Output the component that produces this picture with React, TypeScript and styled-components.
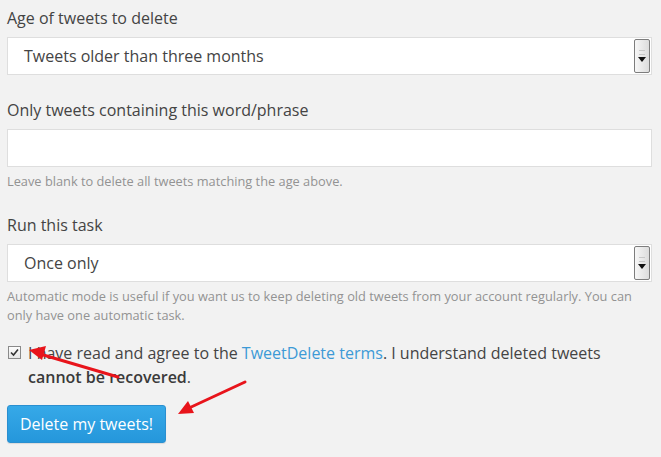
import React from "react";
import styled, { createGlobalStyle } from "styled-components";

const Global = createGlobalStyle`
  html, body { margin: 0; padding: 0; background: #f2f2f2; }
  body { font-family: "Open Sans", "DejaVu Sans", sans-serif; color: #444; }
`;

const Page = styled.div`
  position: relative;
  width: 661px;
  height: 457px;
  overflow: hidden;
  background: #f2f2f2;
`;

const Form = styled.form`
  display: flex;
  flex-direction: column;
  padding: 8px 9px 0 7px;
`;

const Label = styled.div<{ $top?: number }>`
  font-size: 16px;
  line-height: 20px;
  color: #444;
  margin-top: ${(p) => p.$top ?? 0}px;
`;

const Box = styled.div<{ $top: number }>`
  position: relative;
  box-sizing: border-box;
  height: 38px;
  margin-top: ${(p) => p.$top}px;
  background: #fff;
  border: 1px solid #dedede;
  display: flex;
  align-items: center;
  padding-left: 16px;
  font-size: 16px;
  color: #444;
`;

const BoxText = styled.span`
  flex: 1;
`;

const DropButton = styled.span`
  box-sizing: border-box;
  width: 16px;
  height: 34px;
  margin-right: 1px;
  border: 1px solid #7d7d7d;
  border-radius: 2px;
  background: linear-gradient(to right, #f7f7f7, #dcdcdc);
  display: flex;
  flex-direction: column;
  align-items: center;
  justify-content: center;
  gap: 2px;
`;

const Grip = styled.span`
  width: 6px;
  height: 3px;
  border-top: 1px solid #c8c8c8;
  border-bottom: 1px solid #c8c8c8;
`;

const Tri = styled.span`
  width: 0;
  height: 0;
  border-left: 4px solid transparent;
  border-right: 4px solid transparent;
  border-top: 5px solid #111;
`;

const Help = styled.div<{ $top: number }>`
  font-size: 12.8px;
  line-height: 19px;
  color: #939393;
  margin-top: ${(p) => p.$top}px;
`;

const Agree = styled.label`
  display: flex;
  align-items: flex-start;
  gap: 7px;
  margin-top: 16px;
  margin-left: 1px;
  font-size: 16px;
  line-height: 24px;
  color: #444;
`;

const Check = styled.span`
  flex: none;
  box-sizing: border-box;
  width: 13px;
  height: 13px;
  margin-top: 5px;
  border: 1px solid #8a8a8a;
  background: linear-gradient(#fdfdfd, #e6e6e6);
  display: flex;
  align-items: center;
  justify-content: center;
`;

const Link = styled.a`
  color: #3d9ad6;
  text-decoration: none;
`;

const Strong = styled.strong`
  color: #3a3a3a;
  font-weight: 600;
`;

const Button = styled.button`
  align-self: flex-start;
  margin-top: 16px;
  height: 38px;
  width: 159px;
  border: 1px solid #2a8fd0;
  border-radius: 3px;
  background: linear-gradient(#36a9e8, #2597db);
  color: #fff;
  font-family: "Open Sans", sans-serif;
  font-size: 16px;
  padding: 0;
  box-shadow: 0 1px 1px rgba(0, 0, 0, 0.1);
`;

const Overlay = styled.svg`
  position: absolute;
  left: 0;
  top: 0;
  pointer-events: none;
`;

const Select = ({ text, top }: { text: string; top: number }) => (
  <Box $top={top}>
    <BoxText>{text}</BoxText>
    <DropButton>
      <Grip />
      <Tri />
    </DropButton>
  </Box>
);

export default function App() {
  return (
    <Page>
      <Global />
      <Form>
        <Label>Age of tweets to delete</Label>
        <Select top={9} text="Tweets older than three months" />
        <Label $top={25}>Only tweets containing this word/phrase</Label>
        <Box $top={9} />
        <Help $top={5}>Leave blank to delete all tweets matching the age above.</Help>
        <Label $top={24}>Run this task</Label>
        <Select top={9} text="Once only" />
        <Help $top={5}>
          Automatic mode is useful if you want us to keep deleting old tweets from your account regularly. You can
          only have one automatic task.
        </Help>
        <Agree>
          <Check>
            <svg width="9" height="9" viewBox="0 0 9 9">
              <path d="M1 4.5 L3.5 7 L8 1.5" fill="none" stroke="#333" strokeWidth="1.6" />
            </svg>
          </Check>
          <span>
            I have read and agree to the <Link href="#">TweetDelete terms</Link>. I understand deleted tweets{" "}
            <Strong>cannot be recovered</Strong>.
          </span>
        </Agree>
        <Button type="button">Delete my tweets!</Button>
      </Form>
      <Overlay width="661" height="457" viewBox="0 0 661 457">
        <g stroke="#e8141b" strokeWidth="3" strokeLinecap="round" fill="#e8141b">
          <line x1="118" y1="377" x2="40" y2="354" />
          <polygon points="29,350 46,346 42,360" stroke="none" />
          <line x1="245" y1="382" x2="189" y2="408" />
          <polygon points="178,414 188,401 194,413" stroke="none" />
        </g>
      </Overlay>
    </Page>
  );
}
